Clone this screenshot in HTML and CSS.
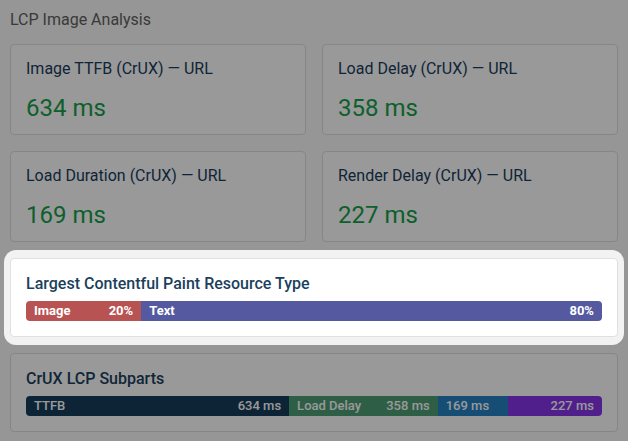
FILE: index.html
```html
<!DOCTYPE html>
<html lang="en">
<head>
<meta charset="utf-8">
<title>LCP Image Analysis</title>
<link rel="stylesheet" href="styles.css">
</head>
<body>
  <main class="page">
    <h2 class="section-title">LCP Image Analysis</h2>
    <div class="stack">
      <div class="metrics">
        <div class="card metric">
          <div class="metric-label">Image TTFB (CrUX) — URL</div>
          <div class="metric-value">634 ms</div>
        </div>
        <div class="card metric">
          <div class="metric-label">Load Delay (CrUX) — URL</div>
          <div class="metric-value">358 ms</div>
        </div>
        <div class="card metric">
          <div class="metric-label">Load Duration (CrUX) — URL</div>
          <div class="metric-value">169 ms</div>
        </div>
        <div class="card metric">
          <div class="metric-label">Render Delay (CrUX) — URL</div>
          <div class="metric-value">227 ms</div>
        </div>
      </div>

      <div class="spotlight">
        <div class="card chart-card">
          <div class="chart-title">Largest Contentful Paint Resource Type</div>
          <div class="bar bar-bold">
            <div class="seg seg-image" style="width:20%"><span>Image</span><span>20%</span></div>
            <div class="seg seg-text" style="width:80%"><span>Text</span><span>80%</span></div>
          </div>
        </div>
      </div>

      <div class="card chart-card">
        <div class="chart-title">CrUX LCP Subparts</div>
        <div class="bar">
          <div class="seg seg-ttfb" style="width:45.68%"><span>TTFB</span><span>634 ms</span></div>
          <div class="seg seg-delay" style="width:25.79%"><span>Load Delay</span><span>358 ms</span></div>
          <div class="seg seg-duration" style="width:12.18%"><span>169 ms</span></div>
          <div class="seg seg-render seg-end" style="width:16.35%"><span>227 ms</span></div>
        </div>
      </div>
    </div>
  </main>
</body>
</html>
```

FILE: styles.css
```css
html, body {
  margin: 0;
  padding: 0;
}

body {
  background: #fafafa;
  font-family: Roboto, "Noto Sans", "Liberation Sans", sans-serif;
  color: #1c3f5e;
}

.page {
  padding: 10px;
}

.section-title {
  margin: 0 0 14px;
  font-size: 16px;
  line-height: 20px;
  font-weight: 400;
  color: #616161;
}

.stack {
  display: flex;
  flex-direction: column;
  gap: 16px;
}

.metrics {
  display: grid;
  grid-template-columns: 1fr 1fr;
  gap: 16px;
}

.card {
  background: #ffffff;
  border: 1px solid #e0e0e0;
  border-radius: 4px;
}

.metric {
  padding: 14px 15px 10px;
}

.metric-label {
  font-size: 16px;
  line-height: 20px;
  font-weight: 400;
  color: #1a3d5c;
}

.metric-value {
  margin-top: 13px;
  font-size: 24px;
  line-height: 32px;
  font-weight: 400;
  color: #17a04a;
}

.spotlight {
  position: relative;
  z-index: 1;
  margin: -8px -6px;
  padding: 8px 6px;
  background: #f2f2f2;
  border-radius: 12px;
  box-shadow: 0 0 0 3000px rgba(0, 0, 0, 0.4);
}

.chart-card {
  padding: 15px 15px 15px;
}

.chart-title {
  font-size: 16px;
  line-height: 20px;
  font-weight: 500;
  color: #1c3f5e;
}

.bar {
  margin-top: 7px;
  display: flex;
  height: 20px;
  border-radius: 4px;
  overflow: hidden;
}

.seg {
  display: flex;
  justify-content: space-between;
  align-items: center;
  box-sizing: border-box;
  padding: 0 8px;
  font-size: 13px;
  line-height: 20px;
  font-weight: 500;
  color: #ffffff;
  white-space: nowrap;
  overflow: hidden;
}

.bar-bold .seg {
  font-weight: 700;
}

.seg-end {
  justify-content: flex-end;
}

.seg-image { background: #b85353; }
.seg-text { background: #5459a0; }

.seg-ttfb { background: #163c5a; }
.seg-delay { background: #4d9d75; }
.seg-duration { background: #2680c3; }
.seg-render { background: #8535e8; }
```
